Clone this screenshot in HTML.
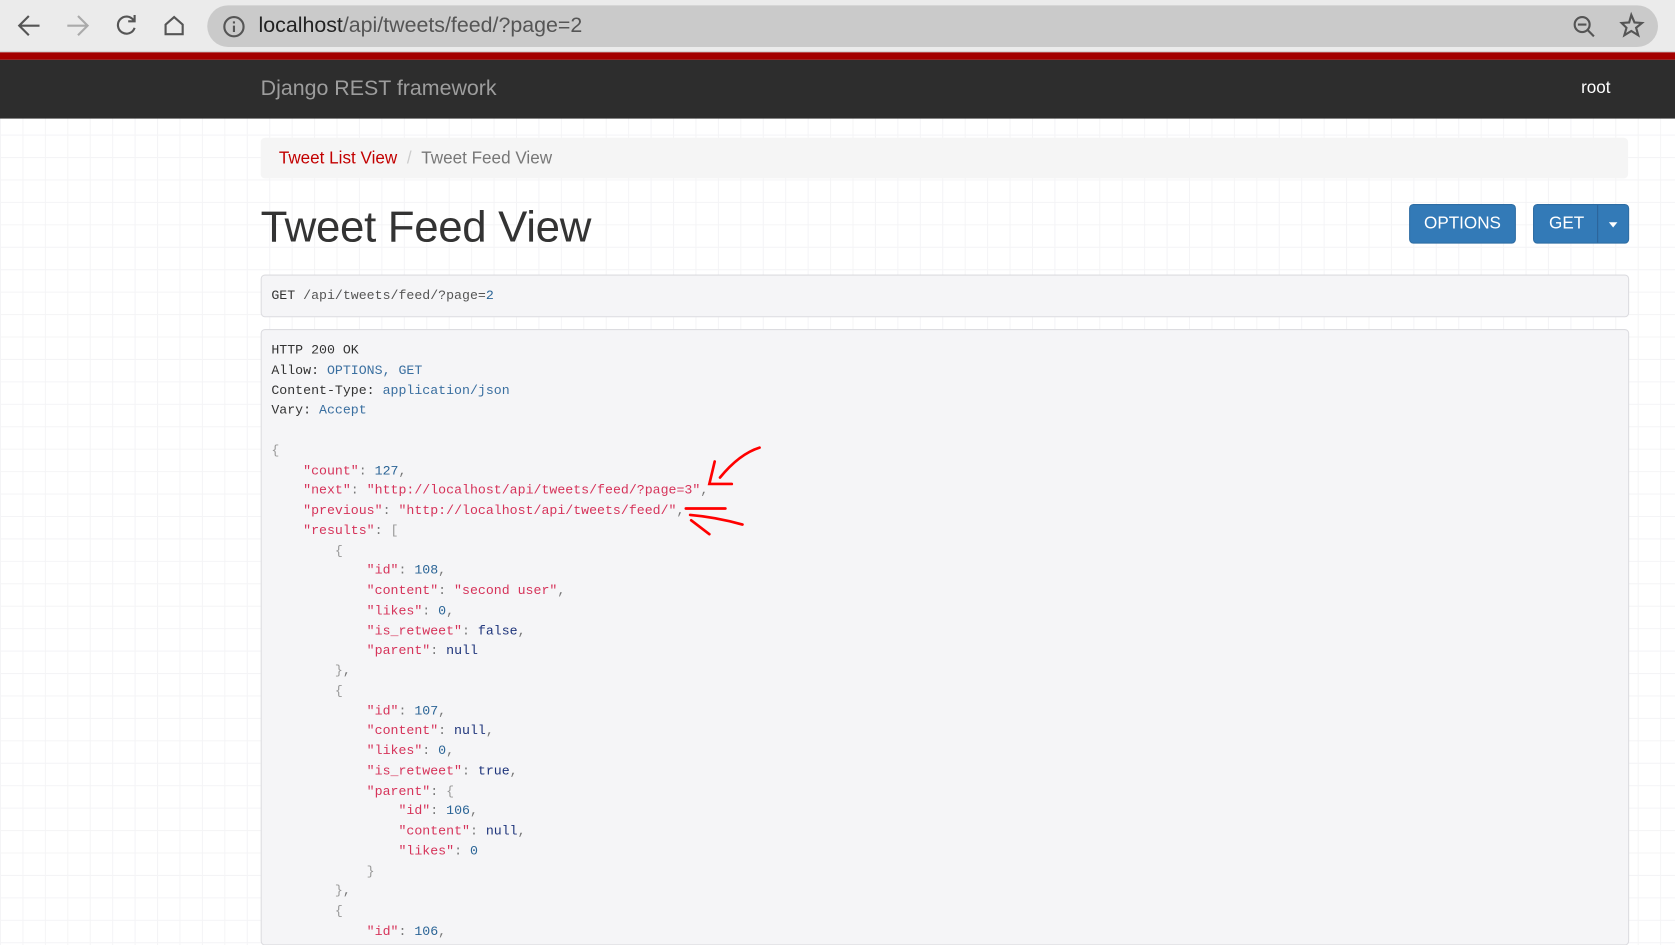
<!DOCTYPE html>
<html><head><meta charset="utf-8"><style>
*{margin:0;padding:0;box-sizing:border-box}
html,body{width:1675px;height:945px;overflow:hidden;background:#fff;font-family:"Liberation Sans",sans-serif}
#w{position:absolute;left:0;top:0;width:1568px;height:885px;overflow:hidden;transform:scale(1.0683);transform-origin:0 0;
background-color:#fff;background-image:linear-gradient(#f4f4f6 1px,transparent 1px),linear-gradient(90deg,#f4f4f6 1px,transparent 1px);background-size:21px 21px;}
.top{position:absolute;left:0;top:0;width:1568px;height:49px;background:#ebebeb;border-bottom:1px solid #cfcfcf}
.omni{position:absolute;left:194px;top:5px;width:1358px;height:39px;border-radius:20px;background:#cacaca}
.url{position:absolute;left:242px;top:13px;font-size:20px;color:#222}
.url span{color:#555}
.red{position:absolute;left:0;top:49px;width:1568px;height:7px;background:#a30000}
.nav{position:absolute;left:0;top:56px;width:1568px;height:55px;background:#2d2d2d}
.brand{position:absolute;left:244px;top:16px;font-size:20px;color:#9d9d9d}
.root{position:absolute;left:1480px;top:18px;font-size:16px;color:#fff}
.bc{position:absolute;left:244px;top:129px;width:1280px;height:38px;background:#f5f5f5;border-radius:4px;font-size:16px;padding:11px 17px;color:#777}
.bc a{color:#c20000;text-decoration:none}
.bc i{font-style:normal;color:#ccc;padding:0 9px}
h1{position:absolute;left:244px;top:189px;font-size:41px;font-weight:normal;color:#333;letter-spacing:-0.3px}
.btn{position:absolute;top:191px;height:37px;background:#337ab7;border:1px solid #2e6da4;border-radius:4px;color:#fff;font-size:16px;text-align:center;line-height:36px}
.box{position:absolute;left:244px;width:1281px;background:#f5f5f7;border:1px solid #dcdce0;border-radius:4px;font-family:"Liberation Mono",monospace;font-size:12.4px;color:#333;overflow:hidden}
pre{font-family:"Liberation Mono",monospace;font-size:12.4px;line-height:18.75px;white-space:pre}
.k{color:#d6335a}.n{color:#2a6496}.l{color:#1e347b}.p{color:#777}.h{color:#3a6fa0}.b{color:#999}
</style></head><body><div id="w">
<div class="top">
<svg width="190" height="48" style="position:absolute;left:0;top:0" fill="none" stroke-width="2">
<path d="M37 24H19M27 15l-9 9 9 9" stroke="#555"/>
<path d="M63 24h18M73 15l9 9-9 9" stroke="#aaa"/>
<path d="M125 19a8 8 0 1 0 1 7M126 14v6h-6" stroke="#555"/>
<path d="M155 32V23l8-7 8 7v9z" stroke="#555"/>
</svg>
<div class="omni"></div>
<svg width="24" height="24" style="position:absolute;left:207px;top:13px" fill="none" stroke="#555" stroke-width="2"><circle cx="12" cy="12" r="9"/><path d="M12 11v6M12 7v2"/></svg>
<div class="url">localhost<span>/api/tweets/feed/?page=2</span></div>
<svg width="80" height="30" style="position:absolute;left:1470px;top:10px" fill="none" stroke="#555" stroke-width="2"><circle cx="11" cy="13" r="7"/><path d="M7 13h8M16 18l6 6"/><path d="M57 4l3 7 7 .5-5.5 4.5 2 7-6.5-4-6.5 4 2-7L48 11.5l7-.5z"/></svg>
</div>
<div class="red"></div>
<div class="nav"><div class="brand">Django REST framework</div><div class="root">root</div></div>
<div class="bc"><a>Tweet List View</a><i>/</i>Tweet Feed View</div>
<h1>Tweet Feed View</h1>
<div class="btn" style="left:1319px;width:100px">OPTIONS</div>
<div class="btn" style="left:1435px;width:90px;text-align:left;padding-left:14px">GET<span style="position:absolute;left:59px;top:0;width:1px;height:35px;background:#2b6399"></span><span style="position:absolute;left:70px;top:16px;border:4px solid transparent;border-top:5px solid #fff;border-bottom:0"></span></div>
<div class="box" style="top:257px;height:40px;padding:12px 9px"><b style="font-weight:normal">GET</b> <span style="color:#555">/api/tweets/feed/?page=</span><span class="n">2</span></div>
<div class="box" style="top:308px;height:577px;padding:10px 9px">
<pre>HTTP 200 OK
Allow: <span class="h">OPTIONS, GET</span>
Content-Type: <span class="h">application/json</span>
Vary: <span class="h">Accept</span>

<span class="b">{</span>
    <span class="k">"count"</span><span class="p">:</span> <span class="n">127</span><span class="p">,</span>
    <span class="k">"next"</span><span class="p">:</span> <span class="k">"http://localhost/api/tweets/feed/?page=3"</span><span class="p">,</span>
    <span class="k">"previous"</span><span class="p">:</span> <span class="k">"http://localhost/api/tweets/feed/"</span><span class="p">,</span>
    <span class="k">"results"</span><span class="p">:</span> <span class="b">[</span>
        <span class="b">{</span>
            <span class="k">"id"</span><span class="p">:</span> <span class="n">108</span><span class="p">,</span>
            <span class="k">"content"</span><span class="p">:</span> <span class="k">"second user"</span><span class="p">,</span>
            <span class="k">"likes"</span><span class="p">:</span> <span class="n">0</span><span class="p">,</span>
            <span class="k">"is_retweet"</span><span class="p">:</span> <span class="l">false</span><span class="p">,</span>
            <span class="k">"parent"</span><span class="p">:</span> <span class="l">null</span>
        <span class="b">}</span><span class="p">,</span>
        <span class="b">{</span>
            <span class="k">"id"</span><span class="p">:</span> <span class="n">107</span><span class="p">,</span>
            <span class="k">"content"</span><span class="p">:</span> <span class="l">null</span><span class="p">,</span>
            <span class="k">"likes"</span><span class="p">:</span> <span class="n">0</span><span class="p">,</span>
            <span class="k">"is_retweet"</span><span class="p">:</span> <span class="l">true</span><span class="p">,</span>
            <span class="k">"parent"</span><span class="p">:</span> <span class="b">{</span>
                <span class="k">"id"</span><span class="p">:</span> <span class="n">106</span><span class="p">,</span>
                <span class="k">"content"</span><span class="p">:</span> <span class="l">null</span><span class="p">,</span>
                <span class="k">"likes"</span><span class="p">:</span> <span class="n">0</span>
            <span class="b">}</span>
        <span class="b">}</span><span class="p">,</span>
        <span class="b">{</span>
            <span class="k">"id"</span><span class="p">:</span> <span class="n">106</span><span class="p">,</span>
            <span class="k">"content"</span><span class="p">:</span> <span class="l">null</span><span class="p">,</span></pre>
</div>
<svg width="1568" height="885" style="position:absolute;left:0;top:0" fill="none" stroke="#f00" stroke-width="2.5" stroke-linecap="round">
<path d="M711 419C695 424 683 436 674 447"/>
<path d="M669 432L664 453L685 453"/>
<path d="M642 476L679 476"/>
<path d="M646 482Q670 484 695 491"/>
<path d="M647 487L664 500"/>
</svg>
</div></body></html>
